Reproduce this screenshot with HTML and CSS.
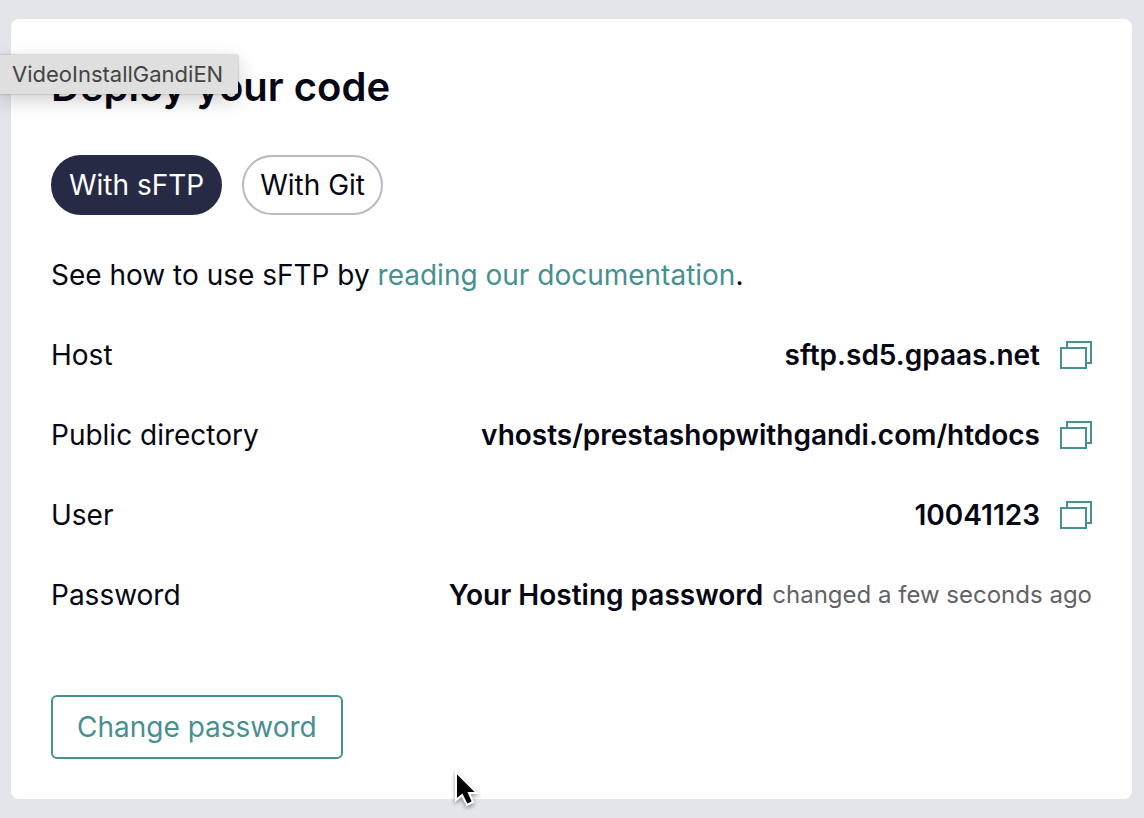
FILE: index.html
```html
<!DOCTYPE html>
<html lang="en">
<head>
<meta charset="utf-8">
<meta name="viewport" content="width=device-width, initial-scale=1">
<title>Deploy your code</title>
<link rel="stylesheet" href="styles.css">
</head>
<body>
<svg class="sprite" aria-hidden="true">
  <symbol id="copy" viewBox="0 0 32 28">
    <path d="M7 6V1H31V22H26M1 7H26V27H1Z" fill="none" stroke="currentColor" stroke-width="2"/>
  </symbol>
</svg>
<main class="card">
  <h1 class="title">Deploy your code</h1>
  <div class="tabs">
    <button class="tab tab-active" type="button">With sFTP</button>
    <button class="tab" type="button">With Git</button>
  </div>
  <p class="intro">See how to use sFTP by <a class="link" href="#">reading our documentation</a>.</p>
  <dl class="details">
    <div class="row">
      <dt>Host</dt>
      <dd class="value">sftp.sd5.gpaas.net <button class="copy" type="button" aria-label="Copy host"><svg class="icon"><use href="#copy"/></svg></button></dd>
    </div>
    <div class="row">
      <dt>Public directory</dt>
      <dd class="value">vhosts/prestashopwithgandi.com/htdocs <button class="copy" type="button" aria-label="Copy public directory"><svg class="icon"><use href="#copy"/></svg></button></dd>
    </div>
    <div class="row">
      <dt>User</dt>
      <dd class="value">10041123 <button class="copy" type="button" aria-label="Copy user"><svg class="icon"><use href="#copy"/></svg></button></dd>
    </div>
    <div class="row">
      <dt>Password</dt>
      <dd class="value value-note">Your Hosting password <span class="note">changed a few seconds ago</span></dd>
    </div>
  </dl>
  <button class="change" type="button">Change password</button>
</main>
<div class="tooltip" role="tooltip">VideoInstallGandiEN</div>
<svg class="cursor" viewBox="0 0 26 38" aria-hidden="true">
  <path d="M2 2V30L8 25L13 35L19 32L15 23H23Z" fill="#000" stroke="#fff" stroke-width="2"/>
</svg>
</body>
</html>
```
FILE: styles.css
```css
* {
  box-sizing: border-box;
}

body {
  margin: 0;
  padding: 19px 12px 19px 11px;
  background: #e4e5ea;
  color: #060614;
  font-family: Inter, "Liberation Sans", sans-serif;
  font-size: 28px;
  line-height: 40px;
}

button {
  font: inherit;
  color: inherit;
  cursor: pointer;
}

.sprite {
  position: absolute;
  width: 0;
  height: 0;
}

.card {
  padding: 40px;
  border-radius: 8px;
  background: #fff;
}

.title {
  margin: 0 0 40px;
  font-size: 40px;
  font-weight: 600;
  line-height: 56px;
}

.tabs {
  display: flex;
  gap: 20px;
}

.tab {
  height: 60px;
  padding: 0 16px;
  border: 2px solid #b9b9c1;
  border-radius: 30px;
  background: #fff;
}

.tab-active {
  border-color: #272a45;
  background: #272a45;
  color: #fff;
}

.intro {
  margin: 40px 0;
}

.link {
  color: #46918f;
  text-decoration: none;
}

.details {
  display: flex;
  flex-direction: column;
  gap: 40px;
  margin: 0 0 80px;
}

.row {
  display: flex;
  justify-content: space-between;
}

.value {
  display: flex;
  align-items: center;
  gap: 20px;
  margin: 0;
  font-weight: 600;
}

.value-note {
  gap: 9px;
}

.note {
  color: #626266;
  font-size: 24px;
  font-weight: 400;
}

.copy {
  display: flex;
  padding: 0;
  border: 0;
  background: none;
  color: #46918f;
}

.icon {
  width: 32px;
  height: 28px;
}

.change {
  display: block;
  height: 64px;
  padding: 0 24px;
  border: 2px solid #46918f;
  border-radius: 6px;
  background: #fff;
  color: #46918f;
}

.tooltip {
  position: absolute;
  top: 55px;
  left: 0;
  padding: 0 15px 1px 12px;
  border-radius: 0 2px 2px 0;
  background: #dfdfdf;
  box-shadow: 0 0 2px rgba(0, 0, 0, 0.35), 0 6px 20px rgba(0, 0, 0, 0.2);
  color: #444;
  font-size: 22px;
  line-height: 38px;
}

.cursor {
  position: absolute;
  top: 770px;
  left: 454px;
  width: 26px;
  height: 38px;
  filter: drop-shadow(0 2px 2px rgba(0, 0, 0, 0.4));
}
```
